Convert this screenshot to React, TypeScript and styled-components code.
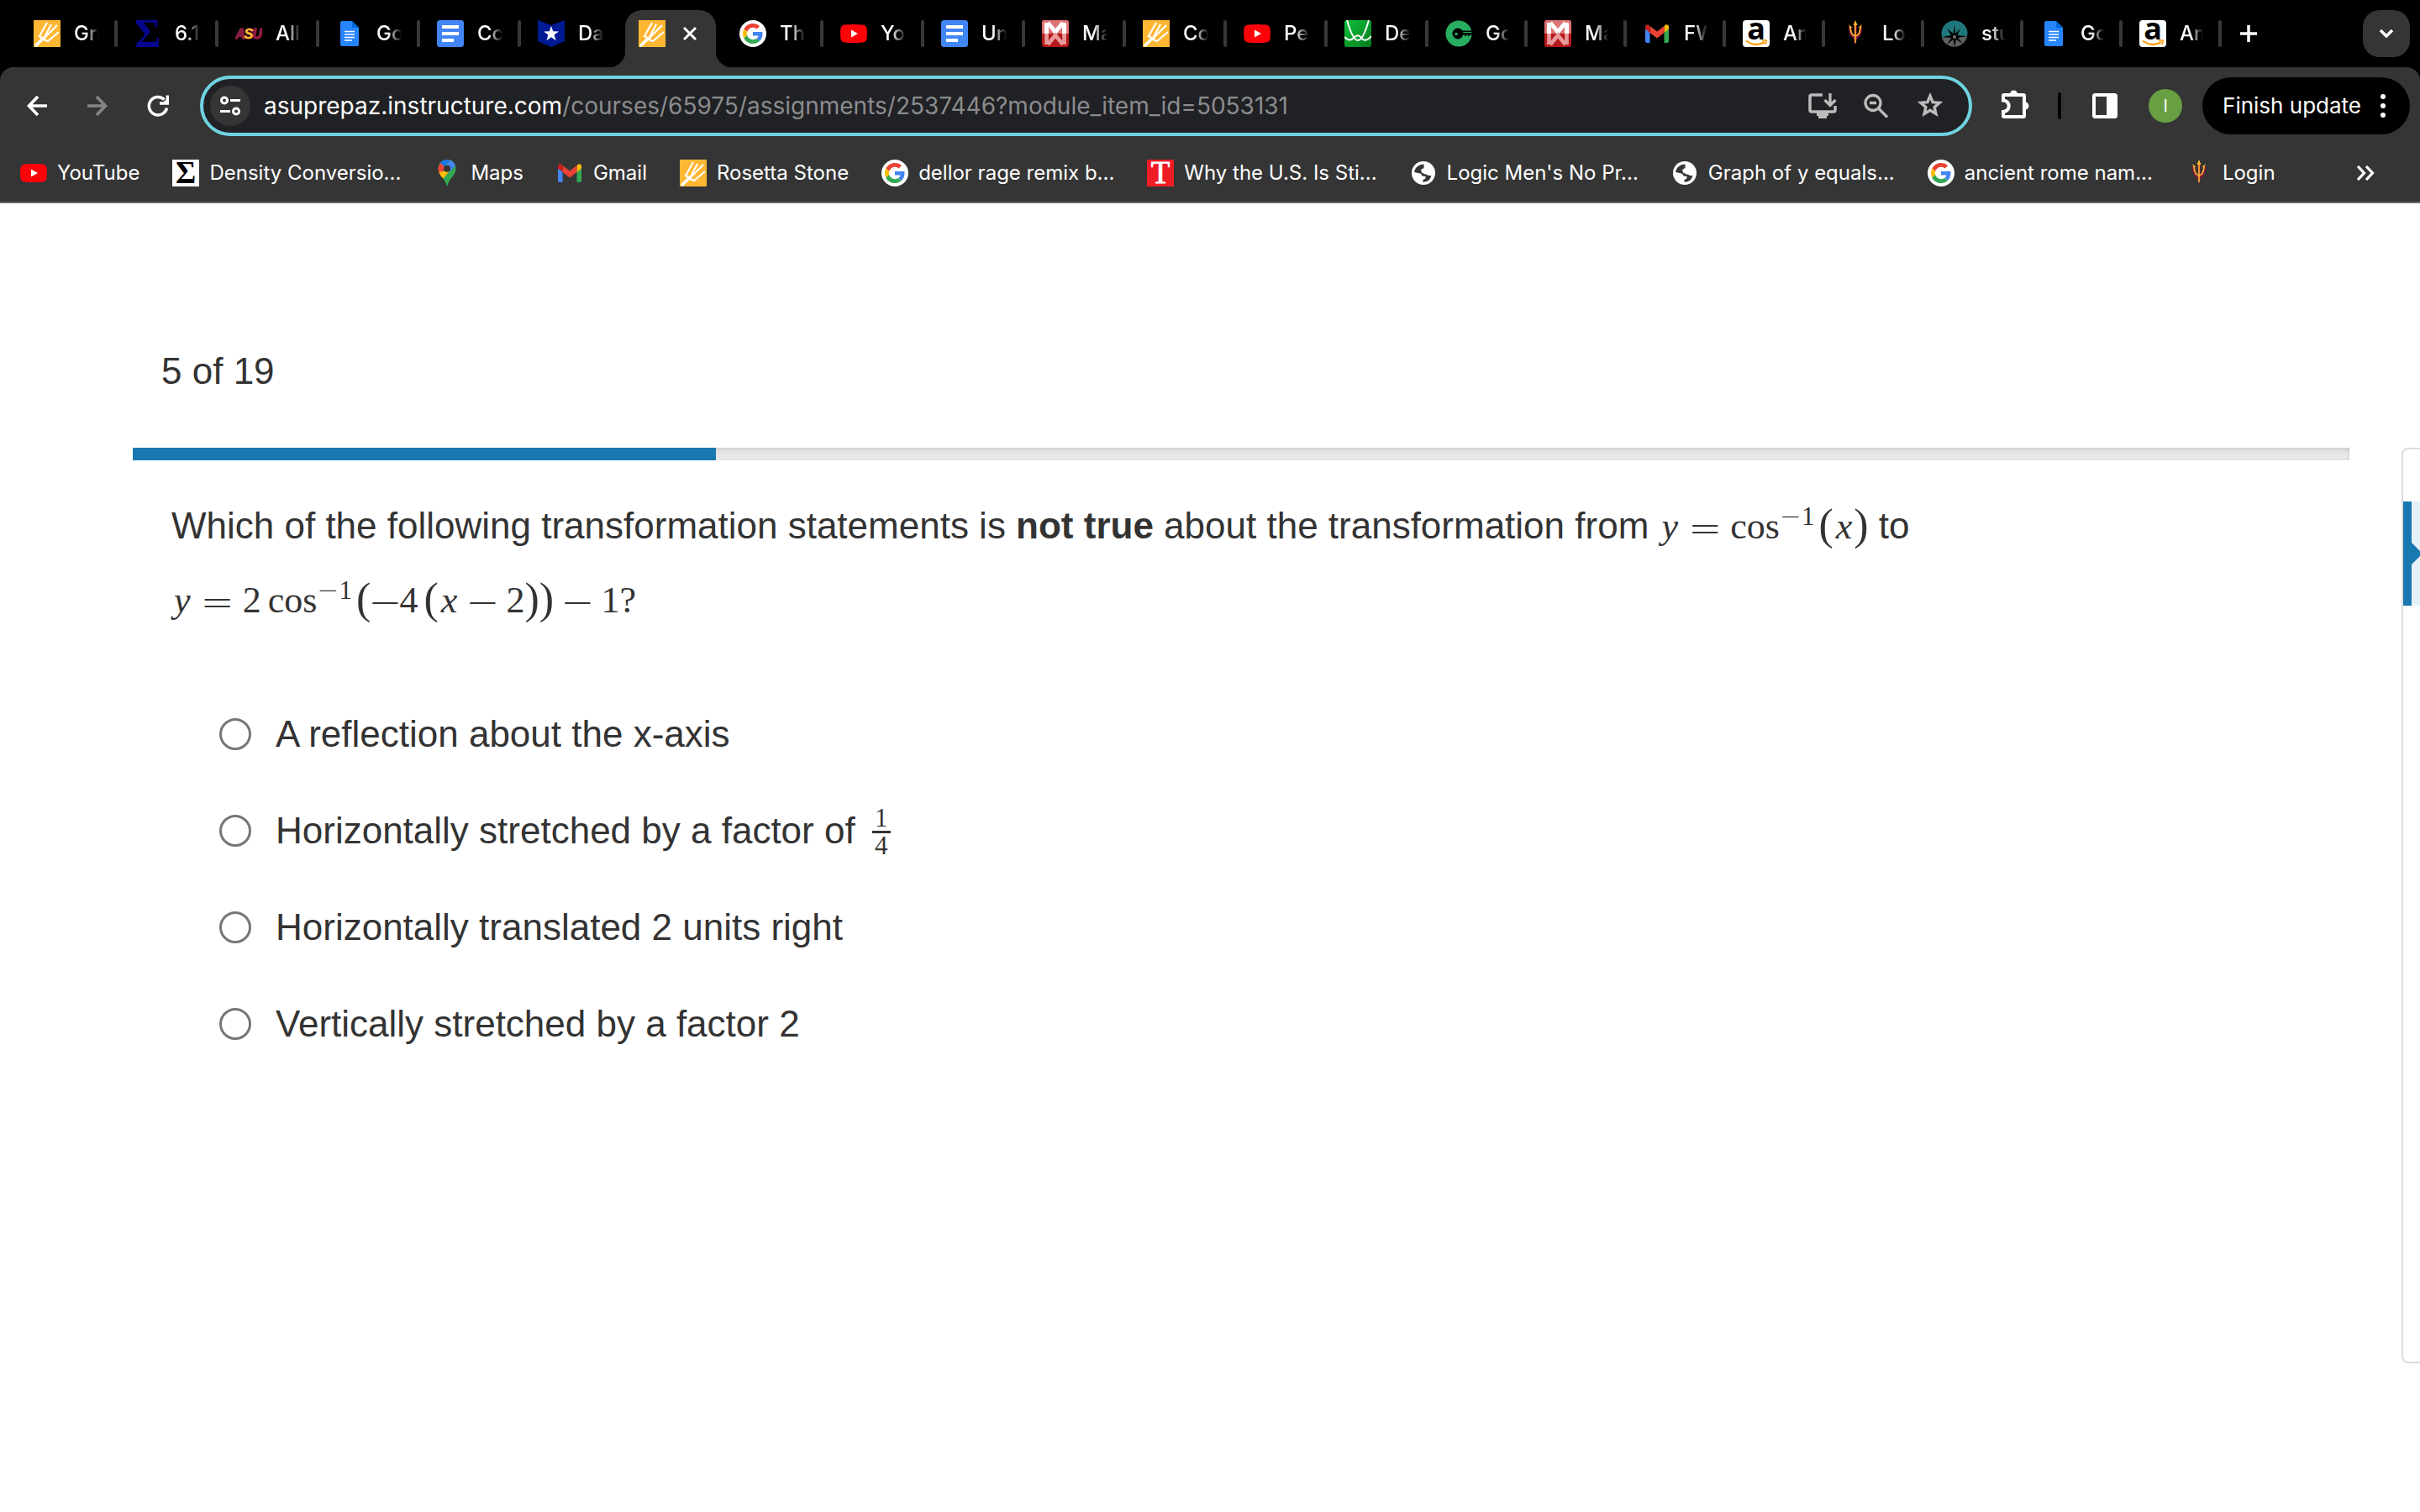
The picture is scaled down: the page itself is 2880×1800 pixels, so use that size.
import React from "react";
import styled, { createGlobalStyle } from "styled-components";

const UI_FONT = `Inter, Roboto, "Liberation Sans", sans-serif`;
const BODY_FONT = `"Liberation Sans", Arial, sans-serif`;
const MATH_FONT = `"Liberation Serif", "Times New Roman", serif`;
const SIGN_FONT = `"DejaVu Sans Light", "DejaVu Sans", sans-serif`;

const GlobalStyle = createGlobalStyle`
  * { box-sizing: border-box; }
  body { margin: 0; background: #fff; overflow-x: hidden; }
  button { border: 0; padding: 0; background: none; color: inherit; font: inherit; cursor: pointer; }
  a { color: inherit; text-decoration: none; }
  svg { display: block; flex: none; }
`;

/* ---------- favicons, each on a 32 x 32 grid ---------- */

const Icon = ({ children, size = 32 }: { children: React.ReactNode; size?: number }) => (
  <svg width={size} height={size} viewBox={`0 0 ${size} ${size}`} aria-hidden="true">
    {children}
  </svg>
);

const TridentTile = () => (
  <Icon>
    <rect width="32" height="32" fill="#ffb733" />
    <g stroke="#fff" strokeWidth="2.2" fill="none">
      <path d="M16 3L7 19L14 23" />
      <path d="M21 5L12 22" />
      <path d="M28 6L11 23" />
      <path d="M30 14L17 25L9 22" />
      <path d="M2 31L12 21" strokeWidth="3.4" />
    </g>
  </Icon>
);

const SigmaBlue = () => (
  <Icon>
    <text x="16" y="32" textAnchor="middle" fontFamily="Liberation Serif" fontWeight="700" fontSize="48" fill="#06068f">Σ</text>
  </Icon>
);

const SigmaTile = () => (
  <Icon>
    <rect width="32" height="32" fill="#fff" />
    <text x="16" y="28" textAnchor="middle" fontFamily="Liberation Serif" fontWeight="700" fontSize="37" fill="#000">Σ</text>
  </Icon>
);

const AsuLogo = () => (
  <Icon>
    <g fontFamily="Liberation Sans" fontWeight="700" fontStyle="italic" textAnchor="middle" strokeWidth="1.6" stroke="#8c1d40" fill="#8c1d40" paintOrder="stroke">
      <text x="6" y="22" fontSize="16">A</text>
      <text x="26" y="22" fontSize="16">U</text>
      <text x="16" y="22" fontSize="17" fill="#ffc627">S</text>
    </g>
  </Icon>
);

const DocsPage = () => (
  <Icon>
    <path d="M7 1H19L27 9V29Q27 31 25 31H7Q5 31 5 29V3Q5 1 7 1Z" fill="#2684fc" />
    <path d="M19 1L27 9H19Z" fill="#0066da" />
    <path d="M10 13.5H22M10 17H22M10 20.5H22M10 24H19" stroke="#fff" strokeWidth="1.7" />
  </Icon>
);

const DocsTile = () => (
  <Icon>
    <rect width="32" height="32" rx="3.5" fill="#4285f4" />
    <path d="M6 8H26M6 16H26M6 24H20" stroke="#fff" strokeWidth="4" />
  </Icon>
);

const StarBadge = () => (
  <Icon>
    <path d="M0 0L16 6L32 0V25L16 32L0 25Z" fill="#001a94" />
    <path d="M16 7L18.2 13.2L25 13.4L19.6 17.4L21.6 24.2L16 20.2L10.4 24.2L12.4 17.4L7 13.4L13.8 13.2Z" fill="#fff" />
  </Icon>
);

const GoogleG = () => (
  <Icon>
    <circle cx="16" cy="16" r="16" fill="#fff" />
    <g transform="translate(4 4) scale(.5)">
      <path fill="#EA4335" d="M24 9.5c3.54 0 6.71 1.22 9.21 3.6l6.85-6.85C35.9 2.38 30.47 0 24 0 14.62 0 6.51 5.38 2.56 13.22l7.98 6.19C12.43 13.72 17.74 9.5 24 9.5z" />
      <path fill="#4285F4" d="M46.98 24.55c0-1.57-.15-3.09-.38-4.55H24v9.02h12.94c-.58 2.96-2.26 5.48-4.78 7.18l7.73 6c4.51-4.18 7.09-10.36 7.09-17.65z" />
      <path fill="#FBBC05" d="M10.53 28.59c-.48-1.45-.76-2.99-.76-4.59s.27-3.14.76-4.59l-7.98-6.19C.92 16.46 0 20.12 0 24c0 3.88.92 7.54 2.56 10.78l7.97-6.19z" />
      <path fill="#34A853" d="M24 48c6.48 0 11.93-2.13 15.89-5.81l-7.73-6c-2.15 1.45-4.92 2.3-8.16 2.3-6.26 0-11.57-4.22-13.47-9.91l-7.98 6.19C6.51 42.62 14.62 48 24 48z" />
    </g>
  </Icon>
);

const YouTube = () => (
  <Icon>
    <path d="M5 5.5Q16 4.5 27 5.5Q31 6 31.5 10Q32.3 16 31.5 22Q31 26 27 26.5Q16 27.5 5 26.5Q1 26 .5 22Q-.3 16 .5 10Q1 6 5 5.5Z" fill="#ff0209" />
    <path d="M13 11.5L21 16L13 20.5Z" fill="#fff" />
  </Icon>
);

const MathTile = () => (
  <Icon>
    <rect width="32" height="32" rx="3" fill="#b5191b" />
    <path d="M3 0H29Q32 0 32 3V16H0V3Q0 0 3 0Z" fill="#de7476" />
    <path d="M5.5 16V3M26.5 16V3M7 3L16 14L25 3" fill="none" stroke="#fff" strokeWidth="5" />
    <path d="M5.5 16V29M26.5 16V29M7 29L16 18L25 29" fill="none" stroke="#e8999b" strokeWidth="4.6" />
  </Icon>
);

const GraphTile = () => (
  <Icon>
    <defs>
      <linearGradient id="graphGreen" x1="0" y1="0" x2="1" y2="1">
        <stop offset="0" stopColor="#0cc23a" />
        <stop offset="1" stopColor="#067a1c" />
      </linearGradient>
    </defs>
    <rect width="32" height="32" rx="3" fill="url(#graphGreen)" />
    <g fill="none" stroke="#fff" strokeWidth="2">
      <path d="M3 0C7 14 11 24 16 24S25 14 29 0" />
      <path d="M0 20C5 25 8 24 11 21S17 17 20 21S27 25 32 19" />
    </g>
  </Icon>
);

const KeyRing = () => (
  <Icon>
    <circle cx="16" cy="16" r="15.5" fill="#27ae60" />
    <circle cx="15" cy="16" r="6.5" fill="#000" />
    <circle cx="13" cy="16.5" r="1.8" fill="#27ae60" />
    <path d="M18 12.5H32V14H20ZM19 15H32V17.5H29V19H27V17.5H25V19H23V17.5H19Z" fill="#000" />
  </Icon>
);

const Gmail = () => (
  <Icon>
    <path d="M2 10V25Q2 27 4 27H7.5V14Z" fill="#4285f4" />
    <path d="M24.5 27H28Q30 27 30 25V10L24.5 14Z" fill="#34a853" />
    <path d="M24.5 7.5V15L30 10.5V8C30 5 27 4.5 25.5 5.8Z" fill="#fbbc04" />
    <path d="M7.5 15V7L16 13.5L24.5 7V15L16 21.5Z" fill="#ea4335" />
    <path d="M2 8V10.5L7.5 15V7.5L6.5 5.8C5 4.5 2 5 2 8Z" fill="#c5221f" />
  </Icon>
);

const Amazon = () => (
  <Icon>
    <rect width="32" height="32" rx="4" fill="#fff" />
    <text x="16" y="22.5" textAnchor="middle" fontFamily="Open Sans" fontWeight="700" fontSize="36" fill="#000">a</text>
    <path d="M4 24.5C11 30 20 30 26 26" fill="none" stroke="#ff9900" strokeWidth="2.2" />
    <path d="M23 24.2Q27 23 28.4 24.4Q28.3 27 26.5 29" fill="none" stroke="#ff9900" strokeWidth="1.5" />
  </Icon>
);

const Pitchfork = () => (
  <Icon>
    <path d="M16 30L13.5 20H18.5Z" fill="#8c1d40" />
    <path d="M9.5 8C10 17 12 19.5 16 20.5C20 19.5 22 17 22.5 8M16 4V20" fill="none" stroke="#8c1d40" strokeWidth="3.2" />
    <path d="M16 2V27M10 7C10 15 12 18 16 19C20 18 22 15 22 7" fill="none" stroke="#ffb52e" strokeWidth="1.6" />
    <path d="M16 0L18.5 6H13.5ZM8 5L12.5 9H9.5ZM24 5L19.5 9H22.5Z" fill="#ffb52e" />
  </Icon>
);

const Compass = () => (
  <Icon>
    <path d="M.5 16A15.5 15.5 0 0 1 31.5 16L31 19L16 20L1 21Z" fill="#1f797c" />
    <path d="M1 21L31 19A15.5 15.5 0 0 1 1 21Z" fill="#5f6063" />
    <path d="M16 5L17.2 16L23 10L19.5 18L31 19L20 21L26 28L18 23L16 32L14.5 23L7 29L12 21L1 20L12 18L7 10L14.8 16Z" fill="#000" />
    <circle cx="16" cy="20" r="2" fill="#77797b" />
  </Icon>
);

const MapsPin = () => (
  <Icon>
    <path d="M16 0C10 0 5.5 4.8 5.5 10.5C5.5 19 13 21 16 32C19 21 26.5 19 26.5 10.5C26.5 4.8 22 0 16 0Z" fill="#34a853" />
    <path d="M6 8L8 3.7L14 8.5L8.5 19.5C7 17 5.5 14 5.5 10.5Z" fill="#ea4335" />
    <path d="M12.8 14L6.3 14.5L9 20L11.5 22.5L19.5 13Z" fill="#fbbc04" />
    <path d="M8 3.7C10 1.3 13 0 16 0L19.5 .6L13 8.5Z" fill="#1a73e8" />
    <path d="M19.5 .6C22.5 1.6 25 4 26 7.3L18.5 15L16 6Z" fill="#4285f4" />
    <circle cx="16" cy="10.8" r="4" fill="#353535" />
  </Icon>
);

const Globe = () => (
  <Icon>
    <circle cx="16" cy="16" r="14" fill="#fff" />
    <path d="M16.5 5.5C10 5.5 5.5 10 5.2 15L12 16.5Q14 17 14.5 19.5L18.5 20Q19 23.5 15.5 24V26.8C21 26.5 23.5 24 24.5 21.5L25.5 19H22Q20 17 18 17.5L14 15.5L13 12L16.5 10Z" fill="#353535" />
    <path d="M5 18Q7 24.5 12.5 26.5V22.5Q9 21.5 8.5 18.5Z" fill="#fff" />
  </Icon>
);

const TimesTile = () => (
  <Icon>
    <rect width="32" height="32" fill="#ee1c25" />
    <text x="16" y="28" textAnchor="middle" fontFamily="Liberation Serif" fontSize="37" fill="#fff" stroke="#fff" strokeWidth="0.8">T</text>
  </Icon>
);

/* ---------- tab strip ---------- */

const TabStrip = styled.nav`
  display: flex;
  align-items: stretch;
  height: 80px;
  padding: 0 12px 0 22px;
  background: #000;
  color: #fff;
  font: 500 24px/32px ${UI_FONT};
`;

const Tab = styled.a<{ $basis: number }>`
  display: flex;
  flex: 0 1 ${(p) => p.$basis}px;
  align-items: center;
  min-width: 0;
  padding: 0 2px 0 18px;
`;

const TabLabel = styled.span`
  flex: 1 1 0;
  min-width: 0;
  margin: 0 18px 0 16px;
  overflow: hidden;
  white-space: nowrap;
  mask-image: linear-gradient(90deg, #000 45%, transparent);
`;

const TabDivider = styled.span<{ $hidden?: boolean }>`
  flex: none;
  width: 4px;
  height: 32px;
  border-radius: 2px;
  background: ${(p) => (p.$hidden ? "transparent" : "#383838")};
`;

const ActiveTab = styled.div`
  position: relative;
  display: flex;
  flex: 0 1 108px;
  align-items: center;
  justify-content: space-between;
  margin: 12px 10px 0 2px;
  padding: 0 22px 12px 16px;
  border-radius: 20px 20px 0 0;
  background: #353535;

  &::before,
  &::after {
    content: "";
    position: absolute;
    bottom: 0;
    width: 20px;
    height: 20px;
  }
  &::before {
    right: 100%;
    background: radial-gradient(circle at 0 0, transparent 20px, #353535 21px);
  }
  &::after {
    left: 100%;
    background: radial-gradient(circle at 100% 0, transparent 20px, #353535 21px);
  }
`;

const NewTab = styled.button`
  display: grid;
  place-items: center;
  width: 56px;
  margin-left: 2px;
`;

const TabSearch = styled.button`
  display: grid;
  place-items: center;
  align-self: center;
  width: 56px;
  height: 56px;
  margin-left: auto;
  border-radius: 20px;
  background: #353535;
`;

type TabItem = { label: string; icon: React.ComponentType; active?: boolean };

const TABS: TabItem[] = [
  { label: "Gra", icon: TridentTile },
  { label: "6.1", icon: SigmaBlue },
  { label: "All D", icon: AsuLogo },
  { label: "Goo", icon: DocsPage },
  { label: "Cop", icon: DocsTile },
  { label: "Das", icon: StarBadge },
  { label: "", icon: TridentTile, active: true },
  { label: "The", icon: GoogleG },
  { label: "You", icon: YouTube },
  { label: "Unt", icon: DocsTile },
  { label: "Mat", icon: MathTile },
  { label: "Cou", icon: TridentTile },
  { label: "Per", icon: YouTube },
  { label: "Des", icon: GraphTile },
  { label: "Go", icon: KeyRing },
  { label: "Mat", icon: MathTile },
  { label: "FW", icon: Gmail },
  { label: "Am", icon: Amazon },
  { label: "Log", icon: Pitchfork },
  { label: "stu", icon: Compass },
  { label: "Goo", icon: DocsPage },
  { label: "Am", icon: Amazon },
];

const Tabs = () => (
  <TabStrip aria-label="Tabs">
    {TABS.map(({ label, icon: Fav, active }, i) =>
      active ? (
        <ActiveTab key={i}>
          <Fav />
          <button aria-label="Close tab">
            <svg width="18" height="18" viewBox="0 0 18 18">
              <path d="M2 2L16 16M16 2L2 16" stroke="#fff" strokeWidth="3" />
            </svg>
          </button>
        </ActiveTab>
      ) : (
        <Tab key={i} href="#" $basis={i < 14 ? 120 : 118}>
          <Fav />
          <TabLabel>{label}</TabLabel>
          <TabDivider $hidden={TABS[i + 1]?.active} />
        </Tab>
      )
    )}
    <NewTab aria-label="New tab">
      <svg width="20" height="20" viewBox="0 0 20 20">
        <path d="M10 0V20M0 10H20" stroke="#fff" strokeWidth="3.5" />
      </svg>
    </NewTab>
    <TabSearch aria-label="Search tabs">
      <svg width="18" height="12" viewBox="0 0 18 12">
        <path d="M2 2L9 9L16 2" fill="none" stroke="#fff" strokeWidth="3.5" />
      </svg>
    </TabSearch>
  </TabStrip>
);

/* ---------- toolbar ---------- */

const ToolbarBack = styled.div`
  background: #000;
`;

const Toolbar = styled.div`
  border-bottom: 2px solid #666;
  border-radius: 16px 16px 0 0;
  background: #353535;
  color: #fff;
`;

const NavRow = styled.div`
  display: flex;
  align-items: center;
  gap: 22px;
  height: 92px;
  padding: 0 12px 0 16px;
`;

const NavButtons = styled.div`
  display: flex;
  gap: 16px;
`;

const ToolButton = styled.button<{ $size: number }>`
  display: grid;
  flex: none;
  place-items: center;
  width: ${(p) => p.$size}px;
  height: ${(p) => p.$size}px;
`;

const AddressBar = styled.div`
  display: flex;
  flex: 1;
  align-items: center;
  height: 72px;
  min-width: 0;
  padding: 0 22px 0 8px;
  border: 4px solid #6fd3e1;
  border-radius: 36px;
  background: #202124;
`;

const SiteInfo = styled.button`
  flex: none;
  width: 48px;
  height: 48px;
  margin-right: 16px;
  border-radius: 50%;
  background: #353535;
`;

const UrlPart = styled.input<{ $muted?: boolean }>`
  flex: ${(p) => (p.$muted ? "1" : "none")};
  field-sizing: ${(p) => (p.$muted ? "fixed" : "content")};
  min-width: 0;
  padding: 0;
  border: 0;
  outline: 0;
  background: transparent;
  color: ${(p) => (p.$muted ? "#8b8c8e" : "#fff")};
  font: 400 28px/40px ${UI_FONT};
`;

const AddressActions = styled.div`
  display: flex;
  gap: 16px;
  color: #bcbcbc;
`;

const RightTools = styled.div`
  display: flex;
  align-items: center;
  gap: 24px;
`;

const ToolDivider = styled.span`
  width: 4px;
  height: 32px;
  border-radius: 2px;
  background: #000;
`;

const Avatar = styled.button`
  width: 40px;
  height: 40px;
  border-radius: 50%;
  background: #689f42;
  color: #fff;
  font: 400 20px/40px ${UI_FONT};
`;

const UpdatePill = styled.button`
  display: flex;
  align-items: center;
  gap: 22px;
  height: 68px;
  padding: 0 28px 0 24px;
  border-radius: 34px;
  background: #000;
  color: #fff;
  font: 400 26px/36px ${UI_FONT};
  white-space: nowrap;
`;

const AddressRow = () => (
  <NavRow>
    <NavButtons>
      <ToolButton $size={56} aria-label="Back">
        <svg width="24" height="24" viewBox="0 0 24 24">
          <path d="M24 12H3M13 1L2.5 12L13 23" fill="none" stroke="#fff" strokeWidth="3.6" />
        </svg>
      </ToolButton>
      <ToolButton $size={56} aria-label="Forward">
        <svg width="24" height="24" viewBox="0 0 24 24">
          <path d="M0 12H21M11 1L21.5 12L11 23" fill="none" stroke="#858585" strokeWidth="3.6" />
        </svg>
      </ToolButton>
      <ToolButton $size={56} aria-label="Reload">
        <svg width="26" height="26" viewBox="0 0 26 26">
          <path d="M23.5 15.5A10.7 10.7 0 1 1 20.5 5.5" fill="none" stroke="#fff" strokeWidth="3.5" />
          <path d="M24.3 .5V10H15" fill="none" stroke="#fff" strokeWidth="3.4" />
          <path d="M18 10L24 4V10Z" fill="#fff" />
        </svg>
      </ToolButton>
    </NavButtons>
    <AddressBar>
      <SiteInfo aria-label="View site information">
        <svg width="48" height="48" viewBox="0 0 48 48" fill="none" stroke="#fff" strokeWidth="3">
          <circle cx="17" cy="17.5" r="3.5" />
          <circle cx="31" cy="30.5" r="3.5" />
          <path d="M24 17.5H36M12 30.5H24" />
        </svg>
      </SiteInfo>
      <UrlPart aria-label="Site" defaultValue="asuprepaz.instructure.com" />
      <UrlPart $muted aria-label="Path" defaultValue="/courses/65975/assignments/2537446?module_item_id=5053131" />
      <AddressActions>
        <ToolButton $size={48} aria-label="Install app">
          <Icon size={40}>
            <path d="M20 7H7Q5 7 5 9V25Q5 27 7 27H33Q35 27 35 25V20" fill="none" stroke="currentColor" strokeWidth="3.5" />
            <path d="M13 28H27V32H25V35H15V32H13Z" fill="currentColor" />
            <path d="M29 5V19M22.5 13L29 19.5L35.5 13" fill="none" stroke="currentColor" strokeWidth="3.2" />
          </Icon>
        </ToolButton>
        <ToolButton $size={48} aria-label="Zoom">
          <Icon size={40}>
            <circle cx="16" cy="16.5" r="9" fill="none" stroke="currentColor" strokeWidth="3.3" />
            <path d="M12 16.5H20M22.5 23L33 33.5" stroke="currentColor" strokeWidth="3.3" />
          </Icon>
        </ToolButton>
        <ToolButton $size={48} aria-label="Bookmark this page">
          <Icon size={40}>
            <path d="M20 8.200L23.100 15.600L31.200 16.300L25.100 21.600L26.900 29.400L20 25.300L13.100 29.400L14.900 21.600L8.800 16.300L16.900 15.600Z" fill="none" stroke="currentColor" strokeWidth="3.400" />
          </Icon>
        </ToolButton>
      </AddressActions>
    </AddressBar>
    <RightTools>
      <ToolButton $size={56} aria-label="Extensions">
        <Icon size={40}>
          <path d="M8 7H31Q32 7 32 8V32Q32 33 31 33H8Q7 33 7 32V27A6.5 6.5 0 0 0 7 13.5V8Q7 7 8 7Z" fill="none" stroke="#fff" strokeWidth="4" />
          <path d="M15 6A4.5 4.5 0 0 1 24 6ZM33 15.5A4.5 4.5 0 0 1 33 24.5Z" fill="#fff" />
        </Icon>
      </ToolButton>
      <ToolDivider />
      <ToolButton $size={56} aria-label="Side panel">
        <svg width="30" height="30" viewBox="0 0 30 30">
          <rect x="2" y="2" width="26" height="26" rx="1.5" fill="none" stroke="#fff" strokeWidth="4" />
          <path d="M17 2H28V28H17Z" fill="#fff" />
        </svg>
      </ToolButton>
      <Avatar aria-label="Profile">I</Avatar>
      <UpdatePill>
        Finish update
        <svg width="8" height="28" viewBox="0 0 8 28" fill="#fff">
          <circle cx="4" cy="3" r="3" />
          <circle cx="4" cy="14" r="3" />
          <circle cx="4" cy="25" r="3" />
        </svg>
      </UpdatePill>
    </RightTools>
  </NavRow>
);

/* ---------- bookmarks ---------- */

const BookmarkRow = styled.nav`
  display: flex;
  align-items: center;
  gap: 39px;
  height: 68px;
  padding: 0 54px 0 24px;
  font: 400 24px/32px ${UI_FONT};
`;

const Bookmark = styled.a`
  display: flex;
  align-items: center;
  gap: 12px;
  white-space: nowrap;
`;

const MoreBookmarks = styled.button`
  margin-left: auto;
`;

const BOOKMARKS: TabItem[] = [
  { label: "YouTube", icon: YouTube },
  { label: "Density Conversio...", icon: SigmaTile },
  { label: "Maps", icon: MapsPin },
  { label: "Gmail", icon: Gmail },
  { label: "Rosetta Stone", icon: TridentTile },
  { label: "dellor rage remix b...", icon: GoogleG },
  { label: "Why the U.S. Is Sti...", icon: TimesTile },
  { label: "Logic Men's No Pr...", icon: Globe },
  { label: "Graph of y equals...", icon: Globe },
  { label: "ancient rome nam...", icon: GoogleG },
  { label: "Login", icon: Pitchfork },
];

const Bookmarks = () => (
  <BookmarkRow aria-label="Bookmarks">
    {BOOKMARKS.map(({ label, icon: Fav }) => (
      <Bookmark key={label} href="#">
        <Fav />
        {label}
      </Bookmark>
    ))}
    <MoreBookmarks aria-label="More bookmarks">
      <svg width="22" height="18" viewBox="0 0 22 18">
        <path d="M2 1L9.5 9L2 17M12 1L19.5 9L12 17" fill="none" stroke="#fff" strokeWidth="3.2" />
      </svg>
    </MoreBookmarks>
  </BookmarkRow>
);

/* ---------- quiz ---------- */

const Page = styled.main`
  display: flex;
  gap: 62px;
  padding-left: 158px;
  overflow: hidden;
  color: #333;
  font: 400 44px/60px ${BODY_FONT};
`;

const Quiz = styled.section`
  flex: 1;
  min-width: 0;
  padding: 170px 0 80px;
`;

const Counter = styled.p`
  margin: 0 0 61px;
  padding-left: 34px;
`;

const Track = styled.div`
  height: 15px;
  background: #e7e7e7;
  box-shadow: inset 0 4px 6px -2px rgba(0, 0, 0, 0.12), inset -2px 0 4px -1px rgba(0, 0, 0, 0.06);
`;

const Fill = styled.div`
  height: 100%;
  background: #1a78b0;
`;

const Question = styled.p`
  margin: 34px 46px 58px;
  line-height: 88px;
`;

const Formula = styled.span`
  font-family: ${MATH_FONT};
  line-height: 0;
  white-space: nowrap;
`;

const Variable = styled.i`
  margin: 0 2px 0 3px;
`;

const Sign = styled.span<{ $gap: number }>`
  margin: 0 ${(p) => p.$gap}px;
  font: 200 48px/0 ${SIGN_FONT};
  vertical-align: -4px;
`;

const FunctionName = styled.span<{ $spaced?: boolean }>`
  margin-left: ${(p) => (p.$spaced ? 8 : 0)}px;
`;

const Superscript = styled.span`
  margin-right: 5px;
  font-size: 31px;
  vertical-align: 16px;
`;

const SmallSign = styled.span`
  font: 200 31px/0 ${SIGN_FONT};
`;

const Paren = styled.span<{ $spaced?: boolean }>`
  margin-left: ${(p) => (p.$spaced ? 7 : 0)}px;
  font-size: 52px;
  vertical-align: -1px;
`;

const Answers = styled.fieldset`
  display: flex;
  flex-direction: column;
  margin: 0;
  padding: 0 0 0 103px;
  border: 0;
`;

const Answer = styled.label`
  display: flex;
  align-items: center;
  gap: 29px;
  height: 115px;
`;

const Radio = styled.input`
  appearance: none;
  flex: none;
  width: 38px;
  height: 38px;
  margin: 0;
  border: 3px solid #767676;
  border-radius: 50%;
  background: #fff;

  &:checked {
    background: radial-gradient(#1a78b0 50%, #fff 55%);
  }
`;

const AnswerText = styled.span`
  display: flex;
  align-items: center;
  gap: 20px;
`;

const Fraction = styled.span`
  display: inline-flex;
  flex-direction: column;
  align-items: center;
  width: 22px;
  padding-top: 4px;
  font: 400 31px/30px ${MATH_FONT};
`;

const Numerator = styled.span`
  align-self: stretch;
  border-bottom: 3px solid #333;
  text-align: center;
`;

const SidePanel = styled.aside`
  flex: none;
  width: 22px;
  height: 1090px;
  margin: 291px 0 0;
  padding-top: 62px;
  overflow: hidden;
  border: 2px solid #dcdcdc;
  border-right: 0;
  border-radius: 8px 0 0 8px;
`;

const CurrentItem = styled.div`
  display: flex;
  align-items: center;
  height: 124px;
  border-left: 10px solid #1a78b0;
  background: #e5f1fb;

  &::before {
    content: "";
    flex: none;
    border: 13px solid transparent;
    border-left-color: #1a78b0;
    border-right-width: 0;
  }
`;

const CURRENT = 5;
const TOTAL = 19;

const ArcCos = ({ spaced }: { spaced?: boolean }) => (
  <>
    <FunctionName $spaced={spaced}>cos</FunctionName>
    <Superscript>
      <SmallSign>−</SmallSign>1
    </Superscript>
  </>
);

const ANSWERS: React.ReactNode[] = [
  "A reflection about the x-axis",
  <>
    Horizontally stretched by a factor of
    <Fraction>
      <Numerator>1</Numerator>
      <span>4</span>
    </Fraction>
  </>,
  "Horizontally translated 2 units right",
  "Vertically stretched by a factor 2",
];

export default function App() {
  return (
    <>
      <GlobalStyle />
      <header>
        <Tabs />
        <ToolbarBack>
          <Toolbar>
            <AddressRow />
            <Bookmarks />
          </Toolbar>
        </ToolbarBack>
      </header>
      <Page>
        <Quiz>
          <Counter>
            {CURRENT} of {TOTAL}
          </Counter>
          <Track role="progressbar" aria-valuenow={CURRENT} aria-valuemax={TOTAL} aria-label="Progress">
            <Fill style={{ width: `${(CURRENT / TOTAL) * 100}%` }} />
          </Track>
          <Question>
            Which of the following transformation statements is <strong>not true</strong> about the transformation from{" "}
            <Formula>
              <Variable>y</Variable>
              <Sign $gap={10}>=</Sign>
              <ArcCos />
              <Paren>(</Paren>
              <Variable>x</Variable>
              <Paren>)</Paren>
            </Formula>{" "}
            to{" "}
            <Formula>
              <Variable>y</Variable>
              <Sign $gap={10}>=</Sign>2<ArcCos spaced />
              <Paren>(</Paren>
              <Sign $gap={-3}>−</Sign>4<Paren $spaced>(</Paren>
              <Variable>x</Variable>
              <Sign $gap={8}>−</Sign>2<Paren>))</Paren>
              <Sign $gap={8}>−</Sign>1?
            </Formula>
          </Question>
          <Answers aria-label="Answers">
            {ANSWERS.map((text, i) => (
              <Answer key={i}>
                <Radio type="radio" name="answer" value={i} />
                <AnswerText>{text}</AnswerText>
              </Answer>
            ))}
          </Answers>
        </Quiz>
        <SidePanel aria-label="Question list">
          <CurrentItem />
        </SidePanel>
      </Page>
    </>
  );
}
